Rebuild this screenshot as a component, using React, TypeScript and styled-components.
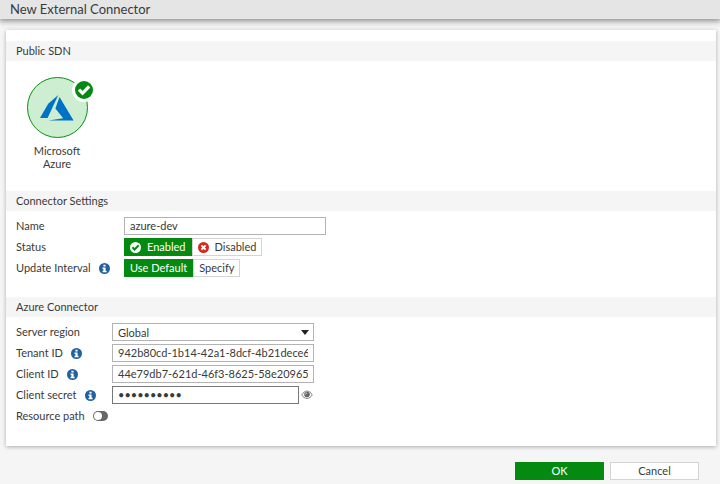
import React, { useState } from "react";
import styled, { createGlobalStyle, css } from "styled-components";

const GlobalStyle = createGlobalStyle`
  *, *::before, *::after { box-sizing: border-box; }
  body {
    margin: 0;
    background: #f5f5f5;
    color: #3a3a3a;
    font: 11px/18px Lato, sans-serif;
  }
  button, input, select { font: inherit; color: inherit; }
`;

const Page = styled.main`
  display: flex;
  flex-direction: column;
`;

const TitleBar = styled.header`
  padding: 0 10px;
  background: #e5e5e5;
  box-shadow: 0 1px 6px 1px rgba(0, 0, 0, 0.45);
`;

const Title = styled.h1`
  margin: 0;
  font-size: 13px;
  line-height: 19px;
  font-weight: 400;
`;

const Panel = styled.form`
  margin: 11px 4px 0 6px;
  padding: 11px 0 21px;
  background: #fff;
  box-shadow: 0 1px 4px rgba(0, 0, 0, 0.3);
`;

const Section = styled.section<{ $space?: number }>`
  padding-bottom: ${(p) => p.$space ?? 0}px;
`;

const SectionTitle = styled.h2`
  margin: 0;
  padding: 0 10px;
  background: #f5f5f5;
  font-size: 11px;
  line-height: 20px;
  font-weight: 400;
`;

const Provider = styled.button`
  display: flex;
  flex-direction: column;
  align-items: center;
  width: 82px;
  margin: 16px 10px 0;
  padding: 0;
  border: 0;
  background: none;
  line-height: 13px;
`;

const ProviderName = styled.span`
  width: 60px;
  text-align: center;
`;

const Disc = styled.span`
  position: relative;
  display: grid;
  place-items: center;
  width: 61px;
  height: 61px;
  margin-bottom: 6px;
  border: 1px solid #0a8f14;
  border-radius: 50%;
  background: #cdeed0;
`;

const Badge = styled.span`
  position: absolute;
  top: 0;
  right: -9px;
  display: flex;
  border: 3px solid #fff;
  border-radius: 50%;
  background: #fff;
`;

const Rows = styled.div<{ $label: number }>`
  display: grid;
  grid-template-columns: ${(p) => p.$label}px 1fr;
  grid-auto-rows: 18px;
  row-gap: 3px;
  padding: 6px 10px 0;
`;

const LabelCell = styled.div`
  display: flex;
  align-items: center;
  gap: 8px;
  white-space: nowrap;
  > svg, > input { flex: none; }
`;

const FieldCell = styled.div`
  display: flex;
  align-items: center;
`;

const fieldBox = css`
  height: 18px;
  padding: 0 5px;
  border: 1px solid #b3b3b3;
  border-radius: 0;
  background: #fff;
  outline: 0;
`;

const TextField = styled.input<{ $dark?: boolean; $width?: number }>`
  ${fieldBox}
  width: ${(p) => p.$width ?? 202}px;
  border-color: ${(p) => (p.$dark ? "#777" : "#b3b3b3")};
`;

const SelectWrap = styled.div`
  display: grid;
  align-items: center;
  width: 202px;
  > * { grid-area: 1 / 1; }
  > svg { justify-self: end; margin-right: 5px; pointer-events: none; }
`;

const SelectField = styled.select`
  ${fieldBox}
  width: 100%;
  appearance: none;
`;

const Choice = styled.button<{ $on: boolean }>`
  display: flex;
  align-items: center;
  gap: 6px;
  height: 18px;
  padding: 0 5px;
  border: 1px solid ${(p) => (p.$on ? "#048a10" : "#d4d4d4")};
  background: ${(p) => (p.$on ? "#048a10" : "#fff")};
  color: ${(p) => (p.$on ? "#fff" : "#3a3a3a")};
  white-space: nowrap;
`;

const IconButton = styled.button`
  display: flex;
  margin-left: 2px;
  padding: 0;
  border: 0;
  background: none;
`;

const Switch = styled.input`
  appearance: none;
  display: flex;
  align-items: center;
  width: 15px;
  height: 10px;
  margin: 0;
  padding: 1px;
  border-radius: 5px;
  background: #666;
  &::before {
    content: "";
    width: 8px;
    height: 8px;
    border-radius: 50%;
    background: #fff;
  }
  &:checked { justify-content: flex-end; background: #048a10; }
`;

const Actions = styled.footer`
  display: flex;
  justify-content: flex-end;
  gap: 6px;
  padding: 16px 21px 4px;
`;

const ActionButton = styled.button<{ $primary?: boolean }>`
  width: 89px;
  height: 18px;
  padding: 0;
  border: 1px solid ${(p) => (p.$primary ? "#048a10" : "#d4d4d4")};
  background: ${(p) => (p.$primary ? "#048a10" : "#fff")};
  color: ${(p) => (p.$primary ? "#fff" : "#3a3a3a")};
  line-height: 16px;
`;

const InfoIcon = () => (
  <svg width="11" height="11" viewBox="0 0 20 20" aria-hidden="true">
    <circle cx="10" cy="10" r="10" fill="#22609f" />
    <path d="M8 3h4v3.4H8zM6.4 8H12v6h1.8v3H6.4v-3H8v-3H6.4z" fill="#fff" />
  </svg>
);

const CheckDisc = ({ size, disc, mark }: { size: number; disc: string; mark: string }) => (
  <svg width={size} height={size} viewBox="0 0 20 20" aria-hidden="true">
    <circle cx="10" cy="10" r="10" fill={disc} />
    <path d="M4.4 9.6l4 4 7.400-7.600" fill="none" stroke={mark} strokeWidth="3.6" />
  </svg>
);

const CrossDisc = () => (
  <svg width="11" height="11" viewBox="0 0 20 20" aria-hidden="true">
    <circle cx="10" cy="10" r="10" fill="#d9291f" />
    <path d="M6.2 6.2l7.6 7.6M13.8 6.2l-7.6 7.6" stroke="#fff" strokeWidth="3.4" />
  </svg>
);

const AzureLogo = () => (
  <svg width="34" height="26" viewBox="0 0 34 26" aria-hidden="true">
    <path d="M18.3 0L8.2 8.7 0 23h7.6z" fill="#0072c6" />
    <path d="M19.5 2L15.4 13.5 23.2 23.2 8.6 25.4H33.6z" fill="#0072c6" />
  </svg>
);

const EyeIcon = () => (
  <svg width="12" height="10" viewBox="0 0 24 20" aria-hidden="true">
    <path d="M1.500 10C7-.5 17-.5 22.500 10 17 19 7 19 1.500 10z" fill="#fff" stroke="#808080" strokeWidth="2" />
    <circle cx="12" cy="9" r="5.600" fill="#666" />
    <path d="M9 9a3 3 0 0 1 3-3" fill="none" stroke="#fff" strokeWidth="1.500" />
  </svg>
);

export default function App() {
  const [enabled, setEnabled] = useState(true);
  const [useDefault, setUseDefault] = useState(true);
  const [reveal, setReveal] = useState(false);

  return (
    <>
      <GlobalStyle />
      <Page>
        <TitleBar>
          <Title>New External Connector</Title>
        </TitleBar>
        <Panel id="connector" onSubmit={(e) => e.preventDefault()}>
          <Section $space={21}>
            <SectionTitle>Public SDN</SectionTitle>
            <Provider type="button" aria-pressed="true">
              <Disc>
                <AzureLogo />
                <Badge>
                  <CheckDisc size={18} disc="#048a10" mark="#fff" />
                </Badge>
              </Disc>
              <ProviderName>Microsoft Azure</ProviderName>
            </Provider>
          </Section>

          <Section $space={20}>
            <SectionTitle>Connector Settings</SectionTitle>
            <Rows $label={108}>
              <LabelCell><label htmlFor="name">Name</label></LabelCell>
              <FieldCell><TextField id="name" defaultValue="azure-dev" /></FieldCell>
              <LabelCell id="status">Status</LabelCell>
              <FieldCell role="group" aria-labelledby="status">
                <Choice type="button" $on={enabled} aria-pressed={enabled} onClick={() => setEnabled(true)}>
                  <CheckDisc size={11} disc={enabled ? "#fff" : "#048a10"} mark={enabled ? "#048a10" : "#fff"} />
                  Enabled
                </Choice>
                <Choice type="button" $on={!enabled} aria-pressed={!enabled} onClick={() => setEnabled(false)}>
                  <CrossDisc />
                  Disabled
                </Choice>
              </FieldCell>
              <LabelCell><span id="interval">Update Interval</span><InfoIcon /></LabelCell>
              <FieldCell role="group" aria-labelledby="interval">
                <Choice type="button" $on={useDefault} aria-pressed={useDefault} onClick={() => setUseDefault(true)}>
                  Use Default
                </Choice>
                <Choice type="button" $on={!useDefault} aria-pressed={!useDefault} onClick={() => setUseDefault(false)}>
                  Specify
                </Choice>
              </FieldCell>
            </Rows>
          </Section>

          <Section>
            <SectionTitle>Azure Connector</SectionTitle>
            <Rows $label={96}>
              <LabelCell><label htmlFor="region">Server region</label></LabelCell>
              <FieldCell>
                <SelectWrap>
                  <SelectField id="region"><option>Global</option></SelectField>
                  <svg width="8" height="5" viewBox="0 0 8 5" aria-hidden="true">
                    <path d="M0 0h8L4 5z" fill="#222" />
                  </svg>
                </SelectWrap>
              </FieldCell>
              <LabelCell><label htmlFor="tenant">Tenant ID</label><InfoIcon /></LabelCell>
              <FieldCell><TextField id="tenant" defaultValue="942b80cd-1b14-42a1-8dcf-4b21dece6" /></FieldCell>
              <LabelCell><label htmlFor="client">Client ID</label><InfoIcon /></LabelCell>
              <FieldCell><TextField id="client" defaultValue="44e79db7-621d-46f3-8625-58e20965" /></FieldCell>
              <LabelCell><label htmlFor="secret">Client secret</label><InfoIcon /></LabelCell>
              <FieldCell>
                <TextField id="secret" type={reveal ? "text" : "password"} $dark $width={187} defaultValue="0123456789" />
                <IconButton type="button" aria-label="Show secret" onClick={() => setReveal(!reveal)}>
                  <EyeIcon />
                </IconButton>
              </FieldCell>
              <LabelCell>
                <label htmlFor="path">Resource path</label>
                <Switch id="path" type="checkbox" role="switch" />
              </LabelCell>
            </Rows>
          </Section>
        </Panel>
        <Actions>
          <ActionButton $primary type="submit" form="connector">OK</ActionButton>
          <ActionButton type="button">Cancel</ActionButton>
        </Actions>
      </Page>
    </>
  );
}
